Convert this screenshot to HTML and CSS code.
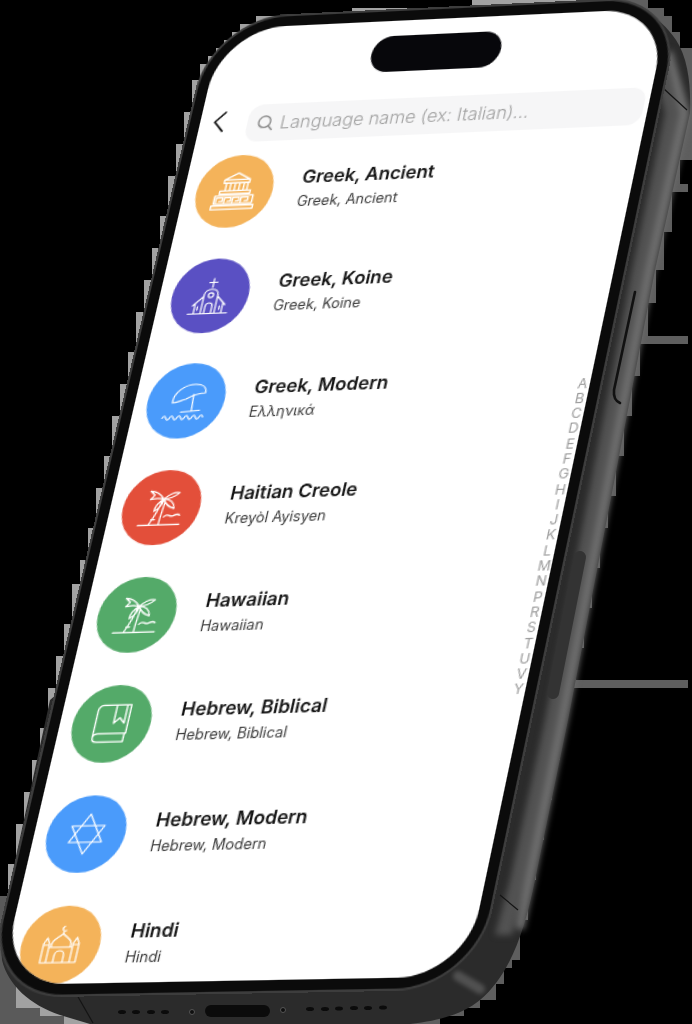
FILE: index.html
```html
<!DOCTYPE html>
<html lang="en">
<head>
<meta charset="utf-8">
<title>Language picker</title>
<link rel="stylesheet" href="styles.css">
</head>
<body>
<main class="stage">
  <svg class="chassis" width="692" height="1024" viewBox="0 0 692 1024" aria-hidden="true">
    <path class="halo-left" d="M240 24H256V16H352V8H472V0H600V400L300 1024H64V1016H40V1008H16V1000H0V896H8V864H16V824H24V792H32V760H40V728H48V688H56V656H64V624H72V584H80V560H88V528H96V488H104V456H112V416H120V384H128V352H136V312H144V280H152V248H160V216H168V176H176V144H184V112H192V80H200V64H208V56H216V48H224V40H232V32H240Z"/>
    <path class="halo-foot" d="M0 896H16V1000H0ZM0 1000H16V1008H40V1016H64V1024H0Z"/>
    <path class="halo-right" d="M600 0H648V8H664V16H672V32H680V48H692V160H680V184H688V192H672V232H664V270H656V303H648V336H688V344H640V376H632V416H624V456H616V496H608V528H600V568H592V608H584V648H576V680H688V688H568V720H560V760H552V800H544V840H536V880H528V920H520V960H512V968H504V984H496V1000H480V1008H464V1016H440V1024H300V400Z"/>
    <path class="metal" d="M560 3L600 1C630 1 660 15 676 40C688 58 691 85 690 113L655 270L568 720L535 880C525 930 510 975 480 1000C465 1012 445 1020 410 1024H90L60 1015C30 1005 8 985 2 960L0 930L50 700L400 400Z"/>
    <g class="side-shade">
      <path class="side-mid" d="M660 45L681 113L646 270L559 720L526 880L512 935L495 935L510 880L545 720L632 270L665 113L648 45Z"/>
      <path class="side-light" d="M672 50L690 113L655 270L568 720L535 880L524 930L516 928L525 880L558 720L645 270L680 113L665 55Z"/>
    </g>
    <path class="corner-glow" d="M458 976L480 989"/>
    <path class="seam" d="M663 88L687 110M500 895L518 910M77 995L93 1023"/>
    <path class="button-slot" d="M635 292L614 390Q613 400 620 403"/>
    <path class="sim-tray" d="M580 557L553 693"/>
    <g class="speaker">
      <ellipse cx="122" cy="1012" rx="4" ry="2"/><ellipse cx="136" cy="1012" rx="4" ry="2"/>
      <ellipse cx="151" cy="1012" rx="4" ry="2"/><ellipse cx="165" cy="1012" rx="4" ry="2"/>
      <ellipse cx="310" cy="1009" rx="4" ry="2"/><ellipse cx="325" cy="1009" rx="4" ry="2"/>
      <ellipse cx="339" cy="1008.500" rx="4" ry="2"/><ellipse cx="354" cy="1008" rx="4" ry="2"/>
      <ellipse cx="368" cy="1008" rx="4" ry="2"/><ellipse cx="383" cy="1007.500" rx="4" ry="2"/>
      <rect x="205" y="1005" width="65" height="12" rx="6"/>
    </g>
    <circle class="screw" cx="192" cy="1012" r="2.500"/>
    <circle class="screw" cx="283" cy="1010" r="2.500"/>
  </svg>

  <div class="device">
    <div class="screen">
      <div class="island"></div>
      <header class="topbar">
        <svg class="back" viewBox="0 0 12 20" aria-hidden="true"><path d="M10 1.500L2 10L10 18.500"/></svg>
        <div class="search">
          <svg class="lens" viewBox="0 0 20 20" aria-hidden="true"><circle cx="9" cy="9" r="6.500"/><path d="M14 14L18 18"/></svg>
          <span class="placeholder">Language name (ex: Italian)...</span>
        </div>
      </header>
      <ul class="list">
        <li class="row">
          <span class="badge orange"><svg class="icon" viewBox="2 2.500 36 34" aria-hidden="true"><path d="M10 10L20 4.500L30 10ZM10 10V12.500H30V10M12 12.500V19M15.500 12.500V19M19 12.500V19M22.500 12.500V19M26 12.500V19M29 12.500V19M8 19H32V21.500H8ZM5 23H35M5 23V29.500M35 23V29.500M5 29.500H35M6.500 28.500V24.500H11.500V27.500H9M13 28.500V24.500H18V27.500H15.500M19.500 28.500V24.500H24.500V27.500H22M26 28.500V24.500H31.500V27.500H29M3.500 31H36.500V34H3.500Z"/></svg></span>
          <div class="names"><strong class="title">Greek, Ancient</strong><span class="sub">Greek, Ancient</span></div>
        </li>
        <li class="row">
          <span class="badge purple"><svg class="icon" viewBox="0 -3 40 40" aria-hidden="true"><path d="M20 2V10M16.500 5.500H23.500M14 33V17C14 10 26 10 26 17V33M17 33V27A3 3 0 0 1 23 27V33M14 18L8 24M26 18L32 24M6 26L8.500 23.500M34 26L31.500 23.500M8 24V33M32 24V33M10.500 30V27M29.500 30V27M3 33.500H37"/><circle cx="20" cy="17" r="2.200"/></svg></span>
          <div class="names"><strong class="title">Greek, Koine</strong><span class="sub">Greek, Koine</span></div>
        </li>
        <li class="row">
          <span class="badge blue"><svg class="icon" viewBox="0 0 40 40" aria-hidden="true"><path d="M8 21C7 12 15 5 25 5C31 5 35 8 35 13C29 13 24 15 19 18C15 19 12 21 8 21ZM25 14L26 28M17 29.500L33 28.500M2 34.500Q3.600 31 5.200 34.500T8.400 34.500T11.600 34.500T14.800 34.500T18 34.500T21.200 34.500T24.400 34.500T27.600 34.500T30.800 34.500T34 34.500T37.200 34.500"/></svg></span>
          <div class="names"><strong class="title">Greek, Modern</strong><span class="sub">Ελληνικά</span></div>
        </li>
        <li class="row">
          <span class="badge red"><svg class="icon" viewBox="1 2 38 36" aria-hidden="true"><path d="M19 14C18 21 15 28 12 34M21.500 15C21 22 20 28 20 34M20 13C17 9 13 6 8 6L12 9.500L9 13C13 12 17 12 20 13ZM20 13C17 15 14 19 14 23C17 21 20 18 20 13ZM20 13C24 9 28 7 32 8C29 11 25 13 20 13ZM20 13C25 13 29 16 30 21C26 20 22 17 20 13ZM13 30H16M23 28C26 24 28 29 31 27C33 26 35 26 36 27M3 34.500H37"/></svg></span>
          <div class="names"><strong class="title">Haitian Creole</strong><span class="sub">Kreyòl Ayisyen</span></div>
        </li>
        <li class="row">
          <span class="badge green"><svg class="icon" viewBox="1 2 38 36" aria-hidden="true"><path d="M19 14C18 21 15 28 12 34M21.500 15C21 22 20 28 20 34M20 13C17 9 13 6 8 6L12 9.500L9 13C13 12 17 12 20 13ZM20 13C17 15 14 19 14 23C17 21 20 18 20 13ZM20 13C24 9 28 7 32 8C29 11 25 13 20 13ZM20 13C25 13 29 16 30 21C26 20 22 17 20 13ZM13 30H16M23 28C26 24 28 29 31 27C33 26 35 26 36 27M3 34.500H37"/></svg></span>
          <div class="names"><strong class="title">Hawaiian</strong><span class="sub">Hawaiian</span></div>
        </li>
        <li class="row">
          <span class="badge green"><svg class="icon" viewBox="3 3 36 34" aria-hidden="true"><path d="M8 31V10A4 4 0 0 1 12 6H33V28H12C9 28 8 29 8 31C8 33 9 34.500 12 34.500H32V28M22 6V20L26 16L30 20V6"/></svg></span>
          <div class="names"><strong class="title">Hebrew, Biblical</strong><span class="sub">Hebrew, Biblical</span></div>
        </li>
        <li class="row">
          <span class="badge blue"><svg class="icon" viewBox="0 0 40 40" aria-hidden="true"><path d="M20 3L34 27H6ZM20 37L6 13H34Z"/></svg></span>
          <div class="names"><strong class="title">Hebrew, Modern</strong><span class="sub">Hebrew, Modern</span></div>
        </li>
        <li class="row">
          <span class="badge orange"><svg class="icon" viewBox="0 0 40 40" aria-hidden="true"><path d="M5 35V19L7.500 14L10 19V35ZM30 35V19L32.500 14L35 19V35ZM5 20H10M30 20H35M5 35H35M10 22H30M12 22C10 16 17 14 20 10.500C23 14 30 16 28 22M16 35V29A4 4 0 0 1 24 29V35M20 10.500V9M22 8C19 9 17.500 6 20 4.500"/></svg></span>
          <div class="names"><strong class="title">Hindi</strong><span class="sub">Hindi</span></div>
        </li>
      </ul>
      <ol class="index">
        <li>A</li><li>B</li><li>C</li><li>D</li><li>E</li><li>F</li><li>G</li><li>H</li><li>I</li><li>J</li><li>K</li><li>L</li><li>M</li><li>N</li><li>P</li><li>R</li><li>S</li><li>T</li><li>U</li><li>V</li><li>Y</li>
      </ol>
    </div>
  </div>
</main>
</body>
</html>
```
FILE: styles.css
```css
* { box-sizing: border-box; }

html, body {
  margin: 0;
  padding: 0;
  background: #000;
}

.stage {
  position: relative;
  width: 692px;
  height: 1024px;
  overflow: hidden;
  background: #000;
  font-family: "Inter", "Liberation Sans", sans-serif;
}

.chassis {
  position: absolute;
  left: 0;
  top: 0;
}

.halo-left { fill: #a2a2a2; }
.halo-foot { fill: #5a5a5a; }
.halo-right { fill: #5e5e5e; }
.metal { fill: #2b2b2b; }
.side-shade { filter: blur(3px); }
.side-mid { fill: #525252; }
.side-light { fill: #6e6e6e; }
.corner-glow { fill: none; stroke: #6a6a6a; stroke-width: 10; stroke-linecap: round; opacity: 0.6; filter: blur(2px); }
.seam { fill: none; stroke: #141414; stroke-width: 1.2; }
.button-slot { fill: none; stroke: #111; stroke-width: 2.6; stroke-linecap: round; }
.sim-tray { fill: none; stroke: #333; stroke-width: 12; stroke-linecap: round; }
.speaker { fill: #0b0b0b; }
.screw { fill: #0f0f0f; stroke: #555; stroke-width: 1; }

.device {
  position: absolute;
  left: 0;
  top: 0;
  width: 390px;
  height: 844px;
  transform-origin: 0 0;
  transform: matrix3d(
    1.123313, -0.054119, 0, -0.00003414,
    -0.264162, 1.078314, 0, -0.00005522,
    0, 0, 1, 0,
    222, 29, 0, 1
  );
}

.screen {
  position: relative;
  width: 390px;
  height: 844px;
  overflow: hidden;
  display: flex;
  flex-direction: column;
  background: #fff;
  border-radius: 56px;
  box-shadow: 0 0 0 9px #0b0b0b, 0 0 0 11px #3d3d3d;
}

.island {
  flex: none;
  width: 113px;
  height: 33px;
  margin: 14px auto 0;
  transform: translateX(-1px);
  border-radius: 17px;
  background: #07070b;
}

.topbar {
  flex: none;
  display: flex;
  align-items: center;
  height: 34px;
  margin-top: 25px;
  padding-right: 4px;
}

.back {
  flex: none;
  width: 12px;
  height: 21px;
  margin: 0 19px 5px 11px;
  fill: none;
  stroke: #151515;
  stroke-width: 1.8;
  stroke-linecap: round;
  stroke-linejoin: round;
}

.search {
  flex: 1;
  display: flex;
  align-items: center;
  gap: 5px;
  height: 34px;
  padding-left: 8px;
  border-radius: 12px;
  background: #f6f6f7;
}

.lens {
  flex: none;
  width: 16px;
  height: 16px;
  fill: none;
  stroke: #8f8f8f;
  stroke-width: 1.8;
  stroke-linecap: round;
}

.placeholder {
  font-size: 15.800px;
  font-weight: 300;
  color: #a0a0a0;
  white-space: nowrap;
}

.list {
  flex: none;
  display: flex;
  flex-direction: column;
  gap: 27.8px;
  margin: 11.75px 0 0;
  padding: 0 0 0 11.25px;
  list-style: none;
}

.row {
  display: flex;
  align-items: center;
  height: 66.5px;
}

.badge {
  flex: none;
  display: flex;
  align-items: center;
  justify-content: center;
  width: 66.5px;
  height: 66.5px;
  margin-right: 24px;
  border-radius: 50%;
}

.orange { background: #f4b35a; }
.purple { background: #5a50c3; }
.blue { background: #4a9bfb; }
.red { background: #e34f3a; }
.green { background: #54aa69; }

.icon {
  width: 40px;
  height: 40px;
  fill: none;
  stroke: #fff;
  stroke-width: 1.2;
  stroke-linecap: round;
  stroke-linejoin: round;
}

.names {
  display: flex;
  flex-direction: column;
  gap: 3px;
  margin-top: -1px;
}

.title {
  font-size: 16px;
  line-height: 22px;
  font-weight: 600;
  color: #141414;
}

.sub {
  font-size: 12.500px;
  line-height: 18px;
  color: #3a3a3a;
}

.index {
  position: absolute;
  left: 378px;
  top: 329.500px;
  width: 12px;
  margin: 0;
  padding: 0;
  list-style: none;
  font-size: 12px;
  line-height: 13.300px;
  text-align: center;
  color: #9b9b9b;
}
```
